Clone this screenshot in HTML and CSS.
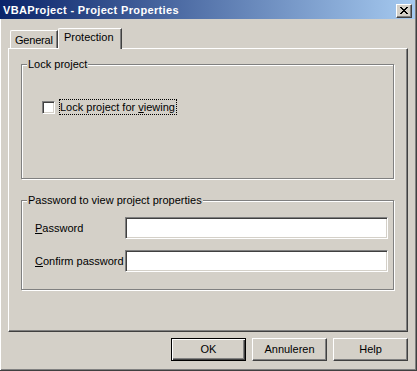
FILE: index.html
```html
<!DOCTYPE html>
<html>
<head>
<meta charset="utf-8">
<link rel="stylesheet" href="styles.css">
</head>
<body>
<div class="window">
  <div class="titlebar">
    <span class="title">VBAProject - Project Properties</span>
    <span class="close">
      <svg width="14" height="12" viewBox="1 1 14 12" shape-rendering="crispEdges">
        <rect x="4" y="3" width="2" height="1"/><rect x="10" y="3" width="2" height="1"/>
        <rect x="5" y="4" width="2" height="1"/><rect x="9" y="4" width="2" height="1"/>
        <rect x="6" y="5" width="4" height="1"/>
        <rect x="7" y="6" width="2" height="1"/>
        <rect x="6" y="7" width="4" height="1"/>
        <rect x="5" y="8" width="2" height="1"/><rect x="9" y="8" width="2" height="1"/>
        <rect x="4" y="9" width="2" height="1"/><rect x="10" y="9" width="2" height="1"/>
      </svg>
    </span>
  </div>
  <div class="body">
    <div class="tabs">
      <div class="tab">General</div>
      <div class="tab active">Protection</div>
    </div>
    <div class="panel">
      <div class="group g1">
        <span class="legend">Lock project</span>
        <label class="check">
          <span class="box"></span>
          <span class="focus">Lock project for <u>v</u>iewing</span>
        </label>
      </div>
      <div class="group g2">
        <span class="legend">Password to view project properties</span>
        <div class="row"><span class="lbl"><u>P</u>assword</span><span class="input"></span></div>
        <div class="row"><span class="lbl"><u>C</u>onfirm password</span><span class="input"></span></div>
      </div>
    </div>
    <div class="buttons">
      <span class="btn default">OK</span>
      <span class="btn">Annuleren</span>
      <span class="btn">Help</span>
    </div>
  </div>
</div>
</body>
</html>
```

FILE: styles.css
```css
html, body {
  margin: 0;
  padding: 0;
  background: #d4d0c8;
}
body {
  font-family: "Liberation Sans", Arial, sans-serif;
  font-size: 11px;
  line-height: 13px;
  color: #000;
}
.window {
  width: 417px;
  height: 371px;
  box-sizing: border-box;
  display: flex;
  flex-direction: column;
  background: #d4d0c8;
  border-right: 1px solid #404040;
  border-bottom: 1px solid #404040;
  box-shadow: inset -1px -1px 0 #808080;
}
.titlebar {
  height: 19px;
  margin-right: 1px;
  flex: none;
  display: flex;
  align-items: flex-start;
  background: linear-gradient(to right, #0a246a, #a6caf0);
}
.title {
  color: #fff;
  font-weight: bold;
  letter-spacing: 0.35px;
  margin: 4px 0 0 3px;
  flex: 1;
}
.close {
  width: 16px;
  height: 14px;
  box-sizing: border-box;
  margin: 4px 3px 0 0;
  background: #d4d0c8;
  border: 1px solid;
  border-color: #fff #404040 #404040 #fff;
  box-shadow: inset -1px -1px 0 #808080;
  display: flex;
}
.close svg {
  display: block;
  fill: #000;
}
.body {
  flex: 1;
  border-left: 1px solid #fff;
  padding: 9px 8px 0 7px;
  display: flex;
  flex-direction: column;
}
.tabs {
  display: flex;
  align-items: flex-end;
  height: 20px;
  padding-left: 2px;
}
.tab {
  box-sizing: border-box;
  height: 18px;
  width: 48px;
  padding: 3px 0 0 4px;
  letter-spacing: -0.2px;
  border-top: 1px solid #fff;
  border-left: 1px solid #fff;
  border-right: 1px solid #404040;
  border-top-left-radius: 2px;
  box-shadow: inset -1px 0 0 #808080;
}
.tab.active {
  position: relative;
  z-index: 1;
  width: 64px;
  height: 21px;
  margin-bottom: -1px;
  padding: 2px 0 0 5px;
  letter-spacing: 0;
  background: #d4d0c8;
}
.panel {
  height: 284px;
  box-sizing: border-box;
  border-top: 1px solid #fff;
  border-left: 1px solid #fff;
  border-right: 1px solid #404040;
  border-bottom: 1px solid #404040;
  box-shadow: inset -1px -1px 0 #808080;
  padding: 15px 13px 0 12px;
}
.group {
  position: relative;
  box-sizing: border-box;
  border: 1px solid #808080;
  box-shadow: inset 1px 1px 0 #fff, 1px 1px 0 #fff;
}
.legend {
  position: absolute;
  top: -7px;
  left: 5px;
  padding: 0 1px;
  background: #d4d0c8;
}
.g1 {
  height: 115px;
  padding: 34px 0 0 20px;
}
.check {
  display: flex;
  align-items: center;
}
.box {
  width: 13px;
  height: 13px;
  box-sizing: border-box;
  background: #fff;
  border: 1px solid;
  border-color: #808080 #fff #fff #808080;
  box-shadow: inset 1px 1px 0 #404040, inset -1px -1px 0 #d4d0c8;
  margin-right: 4px;
}
.focus {
  border: 1px dotted #000;
  line-height: 14px;
  padding: 0 1px 0 0;
}
.g2 {
  height: 90px;
  margin-top: 21px;
  padding: 16px 5px 0 13px;
  display: flex;
  flex-direction: column;
  gap: 11px;
}
.row {
  display: flex;
  align-items: center;
  justify-content: space-between;
}
.input {
  width: 263px;
  height: 22px;
  box-sizing: border-box;
  background: #fff;
  border: 1px solid;
  border-color: #808080 #fff #fff #808080;
  box-shadow: inset 1px 1px 0 #404040, inset -1px -1px 0 #d4d0c8;
}
.buttons {
  display: flex;
  justify-content: flex-end;
  gap: 6px;
  margin-top: 6px;
}
.btn {
  width: 75px;
  height: 23px;
  box-sizing: border-box;
  display: flex;
  align-items: center;
  justify-content: center;
  background: #d4d0c8;
  border: 1px solid;
  border-color: #fff #404040 #404040 #fff;
  box-shadow: inset -1px -1px 0 #808080;
}
.btn.default {
  border-color: #000;
  box-shadow: inset 1px 1px 0 #fff, inset -1px -1px 0 #404040, inset -2px -2px 0 #808080;
}
```
